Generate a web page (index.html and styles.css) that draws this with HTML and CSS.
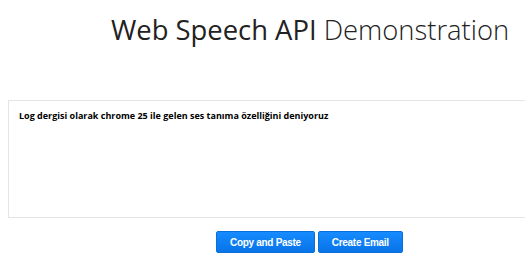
FILE: index.html
```html
<!DOCTYPE html>
<html lang="tr">
<head>
    <meta charset="UTF-8">
    <title>Web Speech API Demonstration</title>
    <link rel="stylesheet" href="styles.css">
</head>
<body>
    <div class="container">
        <h1><span class="strong">Web Speech API</span> Demonstration</h1>
        <div id="results" class="results">
            <span class="final">Log dergisi olarak chrome 25 ile gelen ses tanıma özelliğini deniyoruz</span>
        </div>
        <div class="actions">
            <button class="btn">Copy and Paste</button>
            <button class="btn">Create Email</button>
        </div>
    </div>
</body>
</html>
```
FILE: styles.css
```css
body {
    font-family: "Open Sans", Arial, sans-serif;
    margin: 0;
    padding: 0;
    background: #fff;
    overflow: hidden;
}
.container {
    width: 530px;
    padding: 0 0 0 8px;
}
h1 {
    font-weight: 300;
    font-size: 27.4px;
    color: #222;
    margin: 0;
    padding: 10px 0 0 103px;
    line-height: 40px;
    white-space: nowrap;
}
h1 .strong {
    font-weight: 400;
}
.results {
    margin-top: 50px;
    border: 1px solid #e4e4e4;
    height: 100px;
    padding: 8px 10px;
    font-size: 9px;
    font-weight: 700;
    color: #000;
}
.actions {
    display: flex;
    gap: 3px;
    padding: 13px 0 0 208px;
}
.btn {
    font-family: Arial, "Liberation Sans", sans-serif;
    font-weight: 700;
    font-size: 10px;
    letter-spacing: -0.3px;
    color: #fff;
    background: linear-gradient(#168bff, #0874e8);
    border: 1px solid #0a6fd8;
    border-radius: 2px;
    height: 22px;
    padding: 0 13px;
}
```
